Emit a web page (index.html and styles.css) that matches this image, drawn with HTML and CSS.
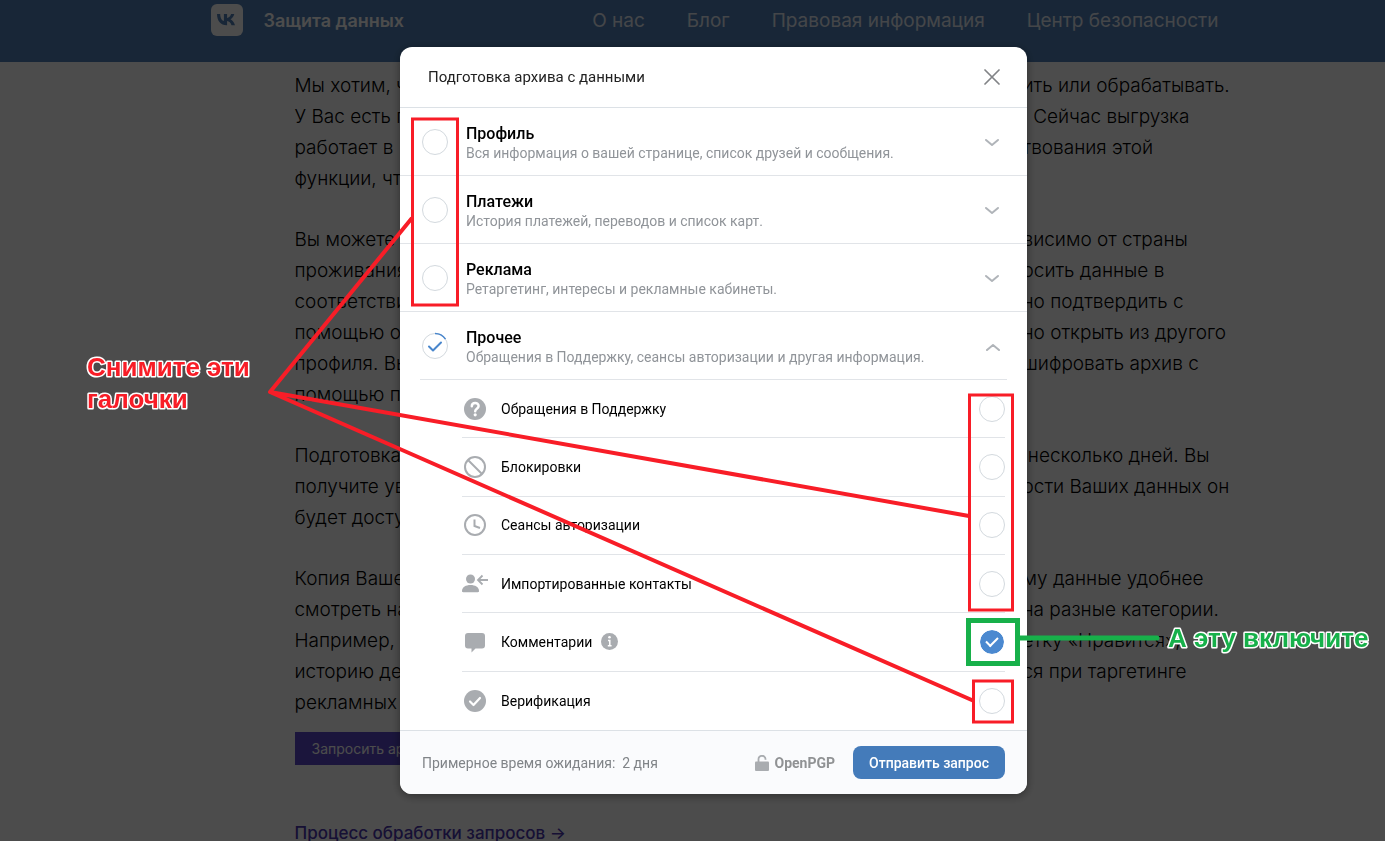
FILE: index.html
```
<!DOCTYPE html>
<html lang="ru">
<head>
    <meta charset="UTF-8">
    <meta name="viewport" content="width=device-width, initial-scale=1.0">
    <title>Защита данных</title>
    <link rel="stylesheet" href="styles.css">
</head>
<body>
    <header class="header">
        <div class="header-inner">
            <a class="logo" href="#" aria-label="VK">
                <svg width="32" height="32" viewBox="0 0 32 32">
                    <rect width="32" height="32" rx="6" fill="#fff"/>
                    <path d="M6 10h3.200c.1 4.700 2.100 6.700 3.700 7.100V10h3.200v4c1.700-.2 3.400-2 4-4h3.200c-.5 2.500-2.400 4.500-3.800 5.300 1.400.7 3.600 2.500 4.500 6h-3.500c-.7-2.300-2.400-3.900-4.400-4.200v4.200h-.5C9.800 21.300 6.100 17 6 10z" fill="#5181b8"/>
                </svg>
            </a>
            <a class="brand" href="#">Защита данных</a>
            <nav class="nav">
                <a href="#">О нас</a>
                <a href="#">Блог</a>
                <a href="#">Правовая информация</a>
                <a href="#">Центр безопасности</a>
            </nav>
        </div>
    </header>

    <main class="page">
        <div class="page-inner">
            <div class="text">
                <p>Мы хотим, ч</p><p>ить или обрабатывать.</p>
                <p>У Вас есть п</p><p>&nbsp; Сейчас выгрузка</p>
                <p>работает в</p><p>твования этой</p>
                <p>функции, чт</p>
            </div>
            <div class="text">
                <p>Вы можете</p><p>висимо от страны</p>
                <p>проживания</p><p>осить данные в</p>
                <p>соответстви</p><p>но подтвердить с</p>
                <p>помощью о</p><p>но открыть из другого</p>
                <p>профиля. Вы</p><p>шифровать архив с</p>
                <p>помощью п</p>
            </div>
            <div class="text">
                <p>Подготовка</p><p>&nbsp;несколько дней. Вы</p>
                <p>получите ув</p><p>ости Ваших данных он</p>
                <p>будет досту</p>
            </div>
            <div class="text">
                <p>Копия Ваше</p><p>му данные удобнее</p>
                <p>смотреть на</p><p>на разные категории.</p>
                <p>Например, в</p><p>етку «Нравится»,</p>
                <p>историю де</p><p>ся при таргетинге</p>
                <p>рекламных</p>
            </div>
            <button class="request" type="button">Запросить ар</button>
            <a class="process" href="#">Процесс обработки запросов →</a>
        </div>
    </main>

    <div class="overlay">
        <form class="modal" role="dialog" aria-labelledby="title">
            <div class="modal-header">
                <h1 id="title">Подготовка архива с данными</h1>
                <button class="close" type="button" aria-label="Закрыть">
                    <svg width="16" height="16" viewBox="0 0 16 16"><path d="M1 1l14 14M15 1L1 15" stroke="#828487" stroke-width="1.700" stroke-linecap="round"/></svg>
                </button>
            </div>

            <div class="group">
                <input type="checkbox" id="profile">
                <label for="profile"><b>Профиль</b><span>Вся информация о вашей странице, список друзей и сообщения.</span></label>
                <svg class="chevron" width="16" height="10" viewBox="0 0 16 10"><path d="M2 3l6 5 6-5"/></svg>
            </div>
            <div class="group">
                <input type="checkbox" id="payments">
                <label for="payments"><b>Платежи</b><span>История платежей, переводов и список карт.</span></label>
                <svg class="chevron" width="16" height="10" viewBox="0 0 16 10"><path d="M2 3l6 5 6-5"/></svg>
            </div>
            <div class="group">
                <input type="checkbox" id="ads">
                <label for="ads"><b>Реклама</b><span>Ретаргетинг, интересы и рекламные кабинеты.</span></label>
                <svg class="chevron" width="16" height="10" viewBox="0 0 16 10"><path d="M2 3l6 5 6-5"/></svg>
            </div>
            <div class="group group-open">
                <div class="partial">
                    <input type="checkbox" id="other">
                    <svg width="28" height="28" viewBox="0 0 28 28" fill="none" stroke="#4986cc">
                        <path d="M14 1.500a12.500 12.500 0 0 1 10.500 5.700" stroke-width="1.500"/>
                        <path d="M8 14.500l4 4 8-8" stroke-width="2" stroke-linecap="round" stroke-linejoin="round"/>
                    </svg>
                </div>
                <label for="other"><b>Прочее</b><span>Обращения в Поддержку, сеансы авторизации и другая информация.</span></label>
                <svg class="chevron" width="16" height="10" viewBox="0 0 16 10"><path d="M3 9l6-5 6 5"/></svg>
            </div>

            <div class="items">
                <div class="item">
                    <svg class="icon" viewBox="0 0 28 24">
                        <circle cx="14" cy="12" r="11" fill="#a9acb0"/>
                        <path d="M10.800 9.300c0-4.400 6.800-4.200 6.800-.3 0 2.700-3.400 2.700-3.400 5.200" fill="none" stroke="#fff" stroke-width="2.500" stroke-linecap="round"/>
                        <circle cx="14.200" cy="17.800" r="1.600" fill="#fff"/>
                    </svg>
                    <label for="support">Обращения в Поддержку</label>
                    <input type="checkbox" id="support">
                </div>
                <div class="item">
                    <svg class="icon" viewBox="0 0 28 24" fill="none" stroke="#a9acb0" stroke-width="2">
                        <circle cx="14" cy="12" r="10"/>
                        <path d="M7 5l14 14"/>
                    </svg>
                    <label for="blocks">Блокировки</label>
                    <input type="checkbox" id="blocks">
                </div>
                <div class="item">
                    <svg class="icon" viewBox="0 0 28 24" fill="none" stroke="#a9acb0" stroke-width="2">
                        <circle cx="14" cy="12" r="10"/>
                        <path d="M13.500 6.500V13l5.500 2"/>
                    </svg>
                    <label for="sessions">Сеансы авторизации</label>
                    <input type="checkbox" id="sessions">
                </div>
                <div class="item">
                    <svg class="icon" viewBox="0 0 28 24" fill="#a9acb0">
                        <circle cx="9.500" cy="7" r="4.500"/>
                        <path d="M1 19c0-4 4-6 8.500-6s8.500 2 8.500 6c0 .8-.4 1.200-1.200 1.200H2.200C1.400 20.200 1 19.800 1 19z"/>
                        <path d="M27 8H17.500M21.500 3.500L17 8l4.500 4.500" fill="none" stroke="#a9acb0" stroke-width="1.800"/>
                    </svg>
                    <label for="contacts">Импортированные контакты</label>
                    <input type="checkbox" id="contacts">
                </div>
                <div class="item">
                    <svg class="icon" viewBox="0 0 28 24" fill="#a9acb0">
                        <path d="M7 3h14a3 3 0 0 1 3 3v9.500a3 3 0 0 1-3 3h-6.500L10.500 22.500v-4H7a3 3 0 0 1-3-3V6a3 3 0 0 1 3-3z"/>
                    </svg>
                    <label for="comments">Комментарии</label>
                    <svg class="info" width="17" height="17" viewBox="0 0 17 17">
                        <circle cx="8.500" cy="8.500" r="8.500" fill="#a9acb0"/>
                        <circle cx="8.500" cy="4.300" r="1.300" fill="#fff"/>
                        <path d="M7 7.500h1.800v5M6.800 12.700h3.800" fill="none" stroke="#fff" stroke-width="1.500"/>
                    </svg>
                    <input type="checkbox" id="comments" checked>
                </div>
                <div class="item">
                    <svg class="icon" viewBox="0 0 28 24">
                        <circle cx="14" cy="12" r="11" fill="#a9acb0"/>
                        <path d="M9 12.500l3.500 3.500 6.500-7" fill="none" stroke="#fff" stroke-width="2.200" stroke-linecap="round" stroke-linejoin="round"/>
                    </svg>
                    <label for="verification">Верификация</label>
                    <input type="checkbox" id="verification">
                </div>
            </div>

            <div class="modal-footer">
                <span class="wait">Примерное время ожидания:&nbsp; 2 дня</span>
                <button class="pgp" type="button">
                    <svg width="14" height="16" viewBox="0 0 14 16"><rect y="6.500" width="14" height="9.500" rx="1" fill="#a9acb0"/><path d="M3.500 7.500V4.500a3.500 3.500 0 0 1 7-.5v.8" fill="none" stroke="#a9acb0" stroke-width="1.800"/></svg>
                    OpenPGP
                </button>
                <button class="submit" type="submit">Отправить запрос</button>
            </div>

            <!-- hint marks drawn over the dialog -->
            <svg class="marks" fill="none" stroke="#f81d27" stroke-width="3">
                <rect x="12.500" y="72" width="45" height="186"/>
                <rect x="569.500" y="348" width="43" height="215"/>
                <rect x="573.500" y="634" width="39" height="41"/>
                <path d="M12 171L-130 345L569 469M-130 345L574 654" stroke-width="4" stroke-linejoin="round"/>
                <rect x="568.500" y="573.500" width="49" height="43" stroke="#17b04a" stroke-width="5"/>
                <path d="M620 591h137" stroke="#17b04a" stroke-width="5" stroke-linecap="round"/>
                <g class="mark-text">
                    <text x="-313" y="329" fill="#f81d27">Снимите эти</text>
                    <text x="-313" y="361" fill="#f81d27">галочки</text>
                    <text x="768" y="600" fill="#17b04a">А эту включите</text>
                </g>
            </svg>
        </form>
    </div>
</body>
</html>
```
FILE: styles.css
```
* {
    box-sizing: border-box;
}
body {
    margin: 0;
    height: 100vh;
    overflow: hidden;
    background: #fff;
    color: #000;
    font-family: Inter, sans-serif;
}
a {
    text-decoration: none;
}
button {
    border: none;
    padding: 0;
    background: none;
    font-family: inherit;
    cursor: pointer;
}

/* page behind the dialog */
.header {
    height: 62px;
    padding-left: 44px;
    background: #5181b8;
    font-size: 18px;
}
.header-inner {
    display: flex;
    align-items: center;
    max-width: 1008px;
    height: 40px;
    margin: 0 auto;
}
.logo {
    height: 32px;
}
.brand {
    margin-left: 21px;
    color: #fff;
    font-weight: 600;
}
.nav {
    display: flex;
    gap: 42px;
    margin-left: auto;
    font-size: 19px;
}
.nav a {
    color: #fff;
    opacity: 0.85;
}
.page {
    padding: 8px 0 0 42px;
    font-size: 19px;
    font-weight: 300;
    line-height: 31px;
}
.page-inner {
    max-width: 1008px;
    margin: 0 auto;
    padding-left: 85px;
}
.text {
    display: grid;
    grid-template-columns: 728px 1fr;
    margin-bottom: 30px;
    white-space: nowrap;
}
.text p {
    margin: 0;
}
.text:last-of-type {
    margin-bottom: 14px;
}
.request {
    display: block;
    height: 33px;
    padding: 0 17px;
    background: #5a49c8;
    color: #fff;
    font-size: 14px;
}
.process {
    display: block;
    margin-top: 53px;
    color: #4b36b0;
    font-size: 17px;
    font-weight: 500;
}

/* dialog */
.overlay {
    position: fixed;
    inset: 0;
    display: flex;
    align-items: flex-start;
    justify-content: center;
    padding: 47px 0 0 42px;
    background: rgba(0, 0, 0, 0.7);
}
.modal {
    position: relative;
    width: 100%;
    max-width: 627px;
    background: #fff;
    border-radius: 12px;
    box-shadow: 0 2px 10px rgba(0, 0, 0, 0.4);
    color: #000;
    font-family: Roboto, sans-serif;
}
.modal-header {
    display: flex;
    align-items: center;
    justify-content: space-between;
    height: 61px;
    padding: 0 27px 0 28px;
    border-bottom: 1px solid #dce1e6;
}
.modal-header h1 {
    margin: 0;
    color: #222;
    font-size: 15px;
    font-weight: 400;
}
.close {
    height: 16px;
}
.group {
    display: flex;
    align-items: center;
    gap: 18px;
    height: 68px;
    padding: 0 27px 0 22px;
    border-bottom: 1px solid #e1e4e8;
}
.group-open {
    margin: 0 20px;
    padding: 0 7px 0 2px;
}
.group label {
    flex: 1;
    padding-top: 2px;
}
.group b {
    display: block;
    font-size: 16px;
    font-weight: 500;
    line-height: 20px;
}
.group span {
    display: block;
    color: #909499;
    font-size: 14px;
    line-height: 18px;
}
.chevron {
    fill: none;
    stroke: #b0b4b9;
    stroke-width: 2;
    stroke-linecap: round;
    stroke-linejoin: round;
}
.partial {
    position: relative;
    height: 26px;
}
.partial svg {
    position: absolute;
    top: -1px;
    left: -1px;
    pointer-events: none;
}
input[type="checkbox"] {
    appearance: none;
    flex: none;
    width: 26px;
    height: 26px;
    margin: 0;
    border: 1px solid #d3d9de;
    border-radius: 50%;
}
input[type="checkbox"]:checked {
    position: relative;
    border: 1px solid #fff;
    background: #4b89d0;
    background-clip: padding-box;
}
input[type="checkbox"]:checked::after {
    content: "";
    position: absolute;
    top: 7px;
    left: 6px;
    box-sizing: border-box;
    width: 12px;
    height: 7px;
    border: solid #fff;
    border-width: 0 0 2px 2px;
    transform: rotate(-45deg);
}
.items {
    display: grid;
    grid-auto-rows: 1fr;
    height: 350px;
    margin: 0 22px 0 62px;
}
.item {
    display: flex;
    align-items: center;
    border-bottom: 1px solid #e1e4e8;
    font-size: 14px;
}
.item:last-child {
    border-bottom: none;
}
.icon {
    width: 28px;
    height: 24px;
    margin: 0 12px 0 -1px;
}
.info {
    margin-left: 9px;
}
.item input {
    margin-left: auto;
}
.modal-footer {
    display: flex;
    align-items: center;
    height: 64px;
    padding: 0 22px;
    border-top: 1px solid #dce1e6;
    border-radius: 0 0 12px 12px;
    background: #fafbfd;
    font-size: 14px;
}
.wait {
    color: #808488;
}
.pgp {
    display: flex;
    align-items: center;
    gap: 6px;
    margin-left: auto;
    color: #909294;
    font-size: 14px;
    font-weight: 700;
}
.submit {
    height: 33px;
    margin-left: 18px;
    padding: 0 16px;
    border-radius: 8px;
    background: #447bba;
    color: #fff;
    font-size: 14px;
    font-weight: 500;
}
.marks {
    position: absolute;
    top: 0;
    left: 0;
    width: 100%;
    height: 100%;
    overflow: visible;
    pointer-events: none;
}
.mark-text {
    font-family: "Liberation Sans", sans-serif;
    font-size: 26px;
    font-weight: 700;
    stroke: #fff;
    stroke-width: 3px;
    stroke-linejoin: round;
    paint-order: stroke;
}
```
